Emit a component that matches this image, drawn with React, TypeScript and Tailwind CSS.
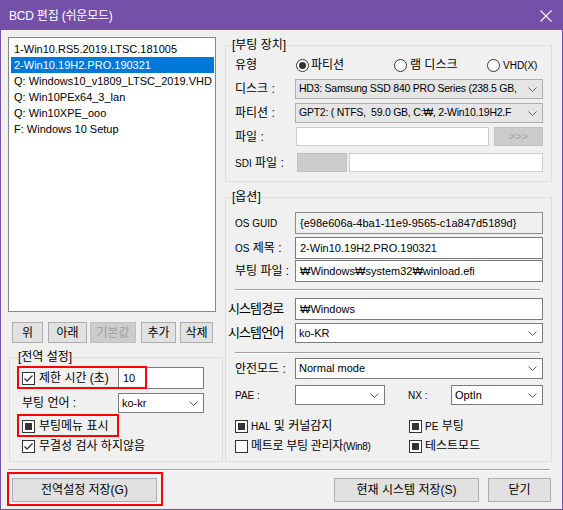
import type { ReactNode } from "react";

type CheckState = "on" | "off" | "mixed";

const FONT = "font-['Liberation_Sans','Noto_Sans_CJK_KR',sans-serif]";

const bootEntries = [
  "1-Win10.RS5.2019.LTSC.181005",
  "2-Win10.19H2.PRO.190321",
  "Q: Windows10_v1809_LTSC_2019.VHD",
  "Q: Win10PEx64_3_lan",
  "Q: Win10XPE_ooo",
  "F: Windows 10 Setup",
];

function Chevron() {
  return (
    <svg width="9" height="5" viewBox="0 0 9 5" className="shrink-0">
      <path d="M0.5 0.5 L4.5 4.5 L8.5 0.5" fill="none" stroke="#606060" strokeWidth="1" />
    </svg>
  );
}

function Check({ state }: { state: CheckState }) {
  return (
    <span className="w-[13px] h-[13px] border border-[#333] bg-white flex items-center justify-center shrink-0">
      {state === "on" && (
        <svg width="11" height="11" viewBox="0 0 11 11">
          <path d="M1.5 5.5 L4 8 L9.5 2.5" fill="none" stroke="#333" strokeWidth="1.3" />
        </svg>
      )}
      {state === "mixed" && <span className="w-[7px] h-[7px] bg-[#333]" />}
    </span>
  );
}

function Radio({ on }: { on?: boolean }) {
  return (
    <span className="w-[13px] h-[13px] rounded-full border border-[#333] bg-white flex items-center justify-center shrink-0">
      {on && <span className="w-[7px] h-[7px] rounded-full bg-[#333]" />}
    </span>
  );
}

function Combo({
  value,
  gray,
  className = "",
  textClass = "text-[11px]",
}: {
  value: string;
  gray?: boolean;
  className?: string;
  textClass?: string;
}) {
  return (
    <div
      className={`min-w-0 flex items-center border pl-[3px] pr-[5px] ${textClass} ${
        gray ? "bg-[#e5e5e5] border-[#adadad]" : "bg-white border-[#7a7a7a]"
      } ${className}`}
    >
      <span className="flex-1 min-w-0 overflow-hidden whitespace-pre mr-[4px]">{value}</span>
      <Chevron />
    </div>
  );
}

function TextBox({ value = "", className = "" }: { value?: string; className?: string }) {
  return (
    <div
      className={`min-w-0 flex items-center border pl-[3px] text-[11px] whitespace-nowrap overflow-hidden ${className}`}
    >
      {value}
    </div>
  );
}

function Btn({ children, className = "", disabled }: { children: ReactNode; className?: string; disabled?: boolean }) {
  return (
    <div
      className={`flex items-center justify-center border text-[12px] ${
        disabled ? "bg-[#cccccc] border-[#bfbfbf] text-[#a0a0a0]" : "bg-[#e1e1e1] border-[#adadad]"
      } ${className}`}
    >
      {children}
    </div>
  );
}

function Group({
  title,
  className = "",
  legendClass = "ml-[6px]",
  children,
}: {
  title: string;
  className?: string;
  legendClass?: string;
  children: ReactNode;
}) {
  return (
    <fieldset className={`border border-[#dcdcdc] p-0 m-0 min-w-0 ${className}`}>
      <legend className={`px-0 text-[12px] leading-[16px] ${legendClass}`}>{title}</legend>
      {children}
    </fieldset>
  );
}

function Sep({ className = "" }: { className?: string }) {
  return <div className={`h-[2px] border-t border-t-[#a0a0a0] border-b border-b-white ${className}`} />;
}

function Label({ children, className = "w-[60px]" }: { children: ReactNode; className?: string }) {
  return <span className={`shrink-0 text-[12px] whitespace-nowrap ${className}`}>{children}</span>;
}

const small = "text-[10px]";
const tight = "text-[10.5px] tracking-[-0.25px]";

export default function App() {
  return (
    <div
      className={`relative w-[563px] h-[510px] border border-[#7450a8] bg-[#f0f0f0] flex flex-col text-black overflow-hidden ${FONT}`}
    >
      <div className="h-[29px] shrink-0 bg-[#7450a8] flex items-center justify-between pl-[8px] pr-[10px] text-white text-[12px]">
        <span className="tracking-[-0.2px]">BCD 편집 (쉬운모드)</span>
        <svg width="12" height="12" viewBox="0 0 12 12">
          <path d="M0.5 0.5 L11.5 11.5 M11.5 0.5 L0.5 11.5" stroke="white" strokeWidth="1.1" />
        </svg>
      </div>

      <div className="flex pt-[7px] pl-[7px] pr-[10px] gap-[2px]">
        {/* left column */}
        <div className="w-[215px] shrink-0 flex flex-col">
          <div className="h-[275px] w-[208px] border border-[#828790] bg-white pt-[3px] pl-[2px] pr-[1px] text-[11px]">
            {bootEntries.map((entry, i) => (
              <div
                key={entry}
                className={`h-[16px] leading-[16px] pl-[3px] whitespace-nowrap ${
                  i === 1 ? "bg-[#0078d7] text-white" : ""
                }`}
              >
                {entry}
              </div>
            ))}
          </div>

          <div className="flex mt-[10px] h-[21px]">
            <Btn className="ml-[4px] w-[31px]">위</Btn>
            <Btn className="ml-[5px] w-[39px]">아래</Btn>
            <Btn className="ml-[3px] w-[46px]" disabled>
              기본값
            </Btn>
            <Btn className="ml-[5px] w-[35px]">추가</Btn>
            <Btn className="ml-[4px] w-[33px]">삭제</Btn>
          </div>

          <Group title="[전역 설정]" className="mt-[6px] ml-[1px] w-[214px]" legendClass="ml-[8px]">
            <div className="pl-[12px] pb-[7px] flex flex-col text-[12px]">
              <div className="mt-[2px] h-[22px] flex items-center">
                <div className="w-[96px] flex items-center gap-[4px]">
                  <Check state="on" />
                  <span>제한 시간 (초)</span>
                </div>
                <TextBox value="10" className="w-[86px] h-[22px] bg-white border-[#7a7a7a] pl-[4px]" />
              </div>
              <div className="mt-[4px] h-[20px] flex items-center">
                <span className="w-[96px]">부팅 언어 :</span>
                <Combo value="ko-kr" className="w-[86px] h-[20px]" />
              </div>
              <div className="mt-[5px] h-[16px] flex items-center gap-[4px]">
                <Check state="mixed" />
                <span>부팅메뉴 표시</span>
              </div>
              <div className="mt-[4px] h-[16px] flex items-center gap-[4px]">
                <Check state="on" />
                <span>무결성 검사 하지않음</span>
              </div>
            </div>
          </Group>
        </div>

        {/* right column */}
        <div className="w-[327px] shrink-0 flex flex-col">
          <Group title="[부팅 장치]">
            <div className="pl-[9px] pr-[8px] pb-[9px] flex flex-col">
              <div className="mt-[4px] h-[16px] flex items-center">
                <Label>유형</Label>
                <div className="ml-[1px] w-[98px] flex items-center gap-[2px] text-[12px]">
                  <Radio on />
                  <span>파티션</span>
                </div>
                <div className="w-[93px] flex items-center gap-[3px] text-[12px]">
                  <Radio />
                  <span>램 디스크</span>
                </div>
                <div className="flex items-center gap-[3px]">
                  <Radio />
                  <span className={small}>VHD(X)</span>
                </div>
              </div>
              <div className="mt-[6px] h-[20px] flex items-center">
                <Label>디스크 :</Label>
                <Combo
                  gray
                  value="HD3: Samsung SSD 840 PRO Series (238.5 GB,"
                  className="flex-1 h-[20px]"
                  textClass={tight}
                />
              </div>
              <div className="mt-[4px] h-[20px] flex items-center">
                <Label>파티션 :</Label>
                <Combo
                  gray
                  value="GPT2: ( NTFS,  59.0 GB, C:₩, 2-Win10.19H2.F"
                  className="flex-1 h-[20px]"
                  textClass={tight}
                />
              </div>
              <div className="mt-[4px] h-[19px] flex items-center">
                <Label className="w-[61px]">파일 :</Label>
                <TextBox className="w-[193px] h-[19px] bg-white border-[#cccccc]" />
                <Btn disabled className="ml-[5px] w-[49px] h-[19px] !text-[11px]">
                  &gt;&gt;&gt;
                </Btn>
              </div>
              <div className="mt-[7px] h-[19px] flex items-center">
                <Label className="w-[62px]">
                  <span className={small}>SDI</span> 파일 :
                </Label>
                <div className="w-[50px] h-[19px] bg-[#cccccc] border border-[#bfbfbf]" />
                <TextBox className="ml-[2px] w-[194px] h-[19px] bg-white border-[#cccccc]" />
              </div>
            </div>
          </Group>

          <Group title="[옵션]" className="mt-[7px]">
            <div className="pl-[9px] pr-[8px] pb-[7px] flex flex-col">
              <div className="mt-[7px] h-[22px] flex items-center">
                <Label>
                  <span className={small}>OS GUID</span>
                </Label>
                <TextBox
                  value="{e98e606a-4ba1-11e9-9565-c1a847d5189d}"
                  className="flex-1 h-[22px] bg-[#f0f0f0] border-[#8c8c8c] pl-[4px]"
                />
              </div>
              <div className="mt-[3px] h-[22px] flex items-center">
                <Label>
                  <span className={small}>OS</span> 제목 :
                </Label>
                <TextBox value="2-Win10.19H2.PRO.190321" className="flex-1 h-[22px] bg-white border-[#7a7a7a] pl-[4px]" />
              </div>
              <div className="mt-[1px] h-[22px] flex items-center">
                <Label>부팅 파일 :</Label>
                <TextBox
                  value="₩Windows₩system32₩winload.efi"
                  className="flex-1 h-[22px] bg-white border-[#7a7a7a] pl-[4px]"
                />
              </div>
              <Sep className="mt-[7px] w-[305px]" />
              <div className="mt-[7px] h-[22px] flex items-center">
                <Label className="-ml-[7px] w-[67px] !text-[13px] tracking-[-0.9px]">시스템경로</Label>
                <TextBox value="₩Windows" className="flex-1 h-[22px] bg-white border-[#7a7a7a] pl-[4px]" />
              </div>
              <div className="mt-[3px] h-[20px] flex items-center">
                <Label className="-ml-[7px] w-[67px] !text-[13px] tracking-[-0.9px]">시스템언어</Label>
                <Combo value="ko-KR" className="flex-1 h-[20px]" />
              </div>
              <Sep className="mt-[9px] w-[305px]" />
              <div className="mt-[4px] h-[21px] flex items-center">
                <Label>안전모드 :</Label>
                <Combo value="Normal mode" className="flex-1 h-[21px]" />
              </div>
              <div className="mt-[6px] h-[20px] flex items-center">
                <Label>
                  <span className={small}>PAE :</span>
                </Label>
                <Combo value="" className="w-[90px] h-[20px]" />
                <Label className="ml-[23px] w-[43px]">
                  <span className={small}>NX :</span>
                </Label>
                <Combo value="OptIn" className="w-[92px] h-[20px]" />
              </div>
              <div className="mt-[13px] h-[16px] flex items-center text-[12px]">
                <div className="w-[174px] flex items-center gap-[3px]">
                  <Check state="mixed" />
                  <span>
                    <span className={small}>HAL</span> 및 커널감지
                  </span>
                </div>
                <div className="flex items-center gap-[3px]">
                  <Check state="mixed" />
                  <span>
                    <span className={small}>PE</span> 부팅
                  </span>
                </div>
              </div>
              <div className="mt-[4px] h-[16px] flex items-center text-[12px]">
                <div className="w-[174px] flex items-center gap-[3px]">
                  <Check state="off" />
                  <span className="tracking-[-0.3px]">
                    메트로 부팅 관리자<span className={small}>(Win8)</span>
                  </span>
                </div>
                <div className="flex items-center gap-[3px]">
                  <Check state="mixed" />
                  <span>테스트모드</span>
                </div>
              </div>
            </div>
          </Group>
        </div>
      </div>

      <Sep className="mt-[7px] ml-[7px] w-[542px]" />

      <div className="mt-[7px] h-[24px] flex pl-[11px] pr-[11px]">
        <Btn className="w-[145px] h-[24px]">전역설정 저장(G)</Btn>
        <div className="flex-1" />
        <Btn className="w-[145px] h-[24px]">현재 시스템 저장(S)</Btn>
        <Btn className="ml-[9px] w-[63px] h-[24px]">닫기</Btn>
      </div>

      {/* red annotation boxes */}
      <div className="absolute left-[16px] top-[365px] w-[130px] h-[23px] border-2 border-[#ff0000]" />
      <div className="absolute left-[16px] top-[413px] w-[102px] h-[23px] border-2 border-[#ff0000]" />
      <div className="absolute left-[6px] top-[471px] w-[156px] h-[34px] border-2 border-[#ff0000]" />
    </div>
  );
}
